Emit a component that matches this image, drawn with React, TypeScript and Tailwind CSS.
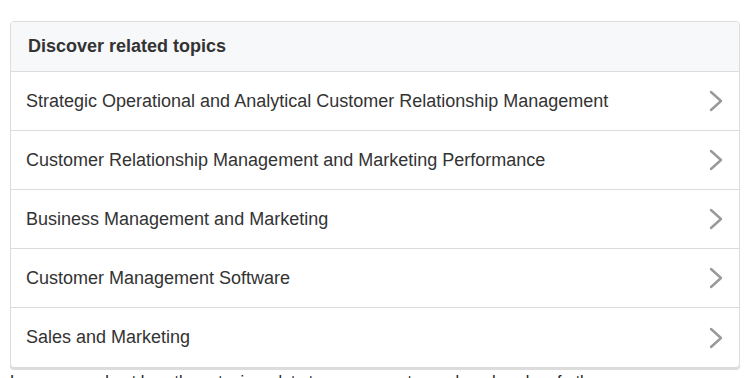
const topics = [
  "Strategic Operational and Analytical Customer Relationship Management",
  "Customer Relationship Management and Marketing Performance",
  "Business Management and Marketing",
  "Customer Management Software",
  "Sales and Marketing",
];

function Chevron() {
  return (
    <svg width="14" height="22" viewBox="0 0 14 22" fill="none" className="shrink-0">
      <polyline
        points="2,2 12,11 2,20"
        stroke="#999"
        strokeWidth="2.4"
        strokeLinecap="round"
        strokeLinejoin="round"
      />
    </svg>
  );
}

export default function App() {
  return (
    <div className="min-h-screen bg-white px-[10px] pt-[21px] font-['Liberation_Sans',Arial,sans-serif] text-[#333]">
      <div className="w-[730px] overflow-hidden rounded border border-[#dcdcdc] bg-white shadow-[0_2px_0_#dcdcdc]">
        <div className="flex h-[50px] items-center border-b border-[#dcdcdc] bg-[#f7f8fa] px-[17px]">
          <h2 className="text-[18px] font-bold text-[#333]">Discover related topics</h2>
        </div>
        {topics.map((t, i) => (
          <a
            key={t}
            href="#"
            className={
              "flex h-[59px] items-center justify-between pl-[15px] pr-[16px] " +
              (i < topics.length - 1 ? "border-b border-[#dcdcdc]" : "")
            }
          >
            <span className="text-[18px] text-[#333]">{t}</span>
            <Chevron />
          </a>
        ))}
      </div>
      <p className="mt-[3px] text-[16px] leading-[22px] text-[#222]">
        Learn more about how these topics relate to your current search and explore further resources.
      </p>
    </div>
  );
}
